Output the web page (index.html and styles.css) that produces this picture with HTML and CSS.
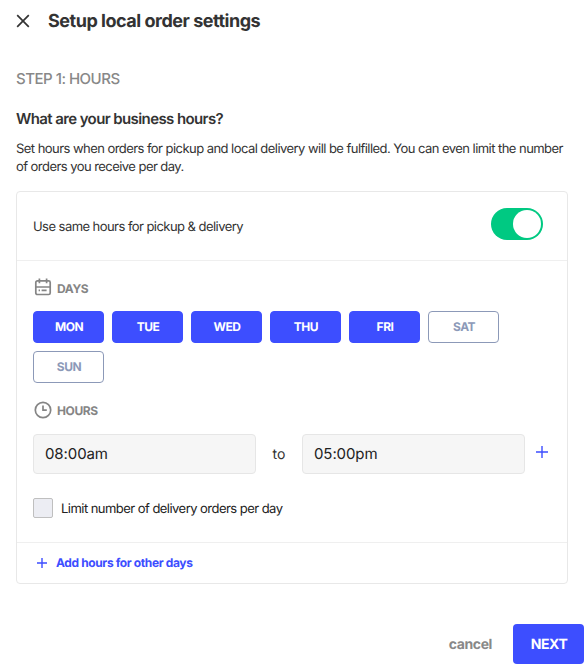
FILE: index.html
```html
<!DOCTYPE html>
<html lang="en">

<head>
    <meta charset="UTF-8">
    <meta name="viewport" content="width=device-width, initial-scale=1.0">
    <title>Setup local order settings</title>
    <link rel="stylesheet" href="styles.css">
</head>

<body>
    <div class="header">
        <button class="close" aria-label="Close">
            <svg width="14" height="14" viewBox="0 0 14 14">
                <path d="M1.2 1.2L12.8 12.8M12.8 1.2L1.2 12.8" />
            </svg>
        </button>
        <h1>Setup local order settings</h1>
    </div>

    <div class="content">
        <div class="step">STEP 1: HOURS</div>
        <h2>What are your business hours?</h2>
        <p class="desc">Set hours when orders for pickup and local delivery will be fulfilled. You can even limit the number of orders you receive per day.</p>

        <div class="card">
            <div class="card-top">
                <span class="same-label">Use same hours for pickup &amp; delivery</span>
                <span class="toggle"></span>
            </div>

            <div class="card-body">
                <div class="label">
                    <svg width="18" height="18" viewBox="0 0 18 18">
                        <rect x="1.8" y="1.9" width="14.4" height="13.6" rx="1.6" />
                        <path d="M1.8 8H16.2M5.4 -0.4V4.2M12.6 -0.4V4.2M4.6 11.4H6M7.6 11.4H12.6" />
                    </svg>
                    <span>DAYS</span>
                </div>
                <div class="days">
                    <button class="day active">MON</button>
                    <button class="day active">TUE</button>
                    <button class="day active">WED</button>
                    <button class="day active">THU</button>
                    <button class="day active">FRI</button>
                    <button class="day">SAT</button>
                    <button class="day">SUN</button>
                </div>

                <div class="label">
                    <svg width="18" height="18" viewBox="0 0 18 18">
                        <circle cx="9" cy="9" r="7.7" />
                        <path d="M9 4.6V9.2H12.8" />
                    </svg>
                    <span>HOURS</span>
                </div>
                <div class="hours">
                    <div class="time">08:00am</div>
                    <span class="to">to</span>
                    <div class="time">05:00pm</div>
                    <button class="plus" aria-label="Add hours">
                        <svg width="12" height="12" viewBox="0 0 12 12">
                            <path d="M6 0V12M0 6H12" />
                        </svg>
                    </button>
                </div>

                <div class="limit">
                    <span class="checkbox"></span>
                    <span class="limit-label">Limit number of delivery orders per day</span>
                </div>
            </div>

            <div class="card-bottom">
                <svg width="10" height="10" viewBox="0 0 10 10">
                    <path d="M5 0V10M0 5H10" />
                </svg>
                <span>Add hours for other days</span>
            </div>
        </div>
    </div>

    <div class="footer">
        <button class="cancel">cancel</button>
        <button class="next">NEXT</button>
    </div>
</body>

</html>
```
FILE: styles.css
```css
* {
    padding: 0;
    margin: 0;
    box-sizing: border-box;
}

body {
    width: 588px;
    height: 669px;
    overflow: hidden;
    background-color: #fff;
    color: #333;
    font-family: Inter, "Liberation Sans", sans-serif;
    font-size: 13px;
    text-rendering: geometricPrecision;
}

button {
    border: none;
    background: none;
    font-family: inherit;
    text-rendering: inherit;
    cursor: pointer;
}

svg {
    display: block;
    overflow: visible;
    fill: none;
    stroke: currentColor;
}

.header {
    display: flex;
    align-items: center;
    height: 41px;
    padding-left: 16px;
}

.close {
    margin-right: 18px;
    color: #333;
}

.close svg {
    stroke-width: 1.7;
}

h1 {
    padding-top: 2px;
    font-size: 18px;
    font-weight: 700;
    letter-spacing: -0.48px;
}

.content {
    padding: 0 20px 0 16px;
}

.step {
    margin-top: 28px;
    line-height: 20px;
    font-size: 15px;
    font-weight: 500;
    letter-spacing: -0.5px;
    color: #888;
}

h2 {
    margin-top: 20px;
    line-height: 20px;
    font-size: 15px;
    font-weight: 600;
    letter-spacing: -0.6px;
}

.desc {
    margin: 11px 0 15px;
    line-height: 18px;
    letter-spacing: -0.55px;
}

.card {
    height: 393px;
    border: 1px solid #e8e8e8;
    border-radius: 4px;
}

.card-top {
    display: flex;
    align-items: center;
    justify-content: space-between;
    height: 69px;
    padding: 0 24px 4px 16px;
    border-bottom: 1px solid #efefef;
}

.same-label {
    padding-top: 6px;
    letter-spacing: -0.55px;
}

.toggle {
    display: flex;
    justify-content: flex-end;
    width: 52px;
    height: 32px;
    padding: 2px;
    border-radius: 16px;
    background-color: #00c982;
}

.toggle::after {
    content: "";
    width: 28px;
    height: 28px;
    border-radius: 50%;
    background-color: #fff;
}

.card-body {
    height: 281px;
    padding: 17px 16px 0;
}

.label {
    display: flex;
    align-items: center;
    gap: 5px;
    height: 20px;
    padding-left: 1px;
    font-size: 12px;
    font-weight: 700;
    letter-spacing: -0.4px;
    color: #858585;
}

.label svg {
    stroke-width: 1.7;
}

.days {
    display: flex;
    flex-wrap: wrap;
    gap: 8px;
    margin: 13px 0 17px;
}

.day {
    width: 71px;
    height: 32px;
    padding: 0 0 1px 1px;
    border: 1px solid #8c99b8;
    border-radius: 4px;
    font-size: 12px;
    font-weight: 700;
    letter-spacing: -0.5px;
    color: #8c99b8;
}

.day.active {
    border-color: #3d4eff;
    background-color: #3d4eff;
    color: #fff;
}

.hours {
    display: flex;
    align-items: center;
    margin-top: 14px;
}

.time {
    width: 223px;
    height: 40px;
    padding-left: 11px;
    border: 1px solid #e6e6e6;
    border-radius: 4px;
    background-color: #f6f6f6;
    font-size: 15px;
    line-height: 38px;
    letter-spacing: -0.1px;
    color: #222;
}

.to {
    width: 46px;
    text-align: center;
    font-size: 14px;
}

.plus {
    margin: 0 0 4px 11px;
    color: #3d4eff;
}

.plus svg,
.card-bottom svg {
    stroke-width: 1.4;
}

.limit {
    display: flex;
    align-items: center;
    gap: 8px;
    margin-top: 24px;
    letter-spacing: -0.54px;
    color: #222;
}

.limit-label {
    padding-top: 2px;
}

.checkbox {
    width: 20px;
    height: 20px;
    border: 1px solid #bfbfbf;
    border-radius: 2px;
    background-color: #ecedf3;
}

.card-bottom {
    display: flex;
    align-items: center;
    gap: 9px;
    height: 41px;
    padding-left: 20px;
    border-top: 1px solid #efefef;
    font-size: 12px;
    font-weight: 700;
    letter-spacing: -0.37px;
    color: #3d4eff;
}

.card-bottom span {
    padding-bottom: 1px;
}

.footer {
    display: flex;
    align-items: center;
    justify-content: flex-end;
    margin-top: 40px;
    padding-right: 4px;
}

.cancel {
    margin-right: 21px;
    font-size: 14px;
    font-weight: 700;
    letter-spacing: -0.4px;
    color: #888;
}

.next {
    width: 71px;
    height: 40px;
    padding-left: 1px;
    border-radius: 4px;
    background-color: #3d4eff;
    font-size: 14px;
    font-weight: 700;
    letter-spacing: -0.4px;
    color: #fff;
}
```
